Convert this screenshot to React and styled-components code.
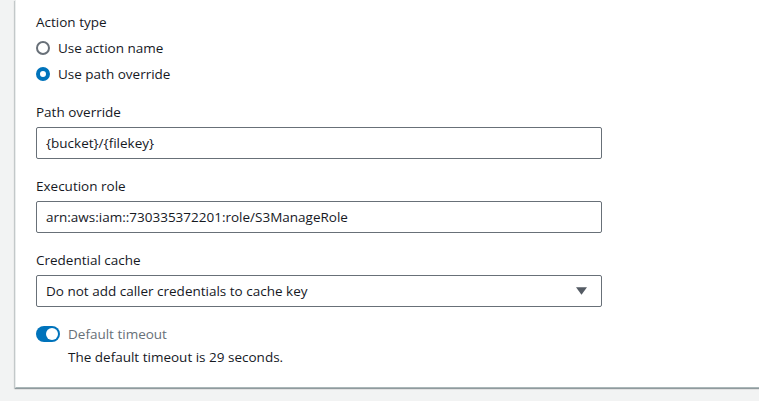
import styled, { createGlobalStyle } from "styled-components";

const GlobalStyle = createGlobalStyle`
    html, body {
        margin: 0;
        padding: 0;
        background: #f2f3f3;
        font-family: "Open Sans", "Noto Sans", Arial, sans-serif;
        color: #16191f;
    }
    * {
        box-sizing: border-box;
    }
`;

export default function App() {
    return (
        <>
            <GlobalStyle />
            <SCPage>
                <SCCard>
                    <SCField>
                        <SCLabel>Action type</SCLabel>
                        <SCRadioGroup>
                            <SCRadioRow>
                                <SCRadio checked={false} />
                                <span>Use action name</span>
                            </SCRadioRow>
                            <SCRadioRow>
                                <SCRadio checked={true} />
                                <span>Use path override</span>
                            </SCRadioRow>
                        </SCRadioGroup>
                    </SCField>

                    <SCField>
                        <SCLabel>Path override</SCLabel>
                        <SCInput>{"{bucket}/{filekey}"}</SCInput>
                    </SCField>

                    <SCField>
                        <SCLabel>Execution role</SCLabel>
                        <SCInput>arn:aws:iam::730335372201:role/S3ManageRole</SCInput>
                    </SCField>

                    <SCField>
                        <SCLabel>Credential cache</SCLabel>
                        <SCSelect>
                            <span>Do not add caller credentials to cache key</span>
                            <SCCaret viewBox="0 0 12 8">
                                <path d="M0 0 H12 L6 8 Z" fill="#545b64" />
                            </SCCaret>
                        </SCSelect>
                    </SCField>

                    <SCToggleBlock>
                        <SCToggleRow>
                            <SCToggle on={true} />
                            <SCToggleLabel>Default timeout</SCToggleLabel>
                        </SCToggleRow>
                        <SCDescription>The default timeout is 29 seconds.</SCDescription>
                    </SCToggleBlock>
                </SCCard>
            </SCPage>
        </>
    );
}

const SCPage = styled.div`
    width: 759px;
    height: 401px;
    overflow: hidden;
    padding-left: 15px;
`;

const SCCard = styled.div`
    width: 800px;
    background: #ffffff;
    border-left: 1px solid #eaeded;
    border-bottom: 1px solid #aab7b8;
    box-shadow: 0 1px 1px 0 rgba(0, 28, 36, 0.3), -1px 1px 1px 0 rgba(0, 28, 36, 0.15);
    padding: 11px 20px 19px 20px;
    display: flex;
    flex-direction: column;
    gap: 16px;
    font-size: 13.5px;
`;

const SCField = styled.div`
    display: flex;
    flex-direction: column;
    gap: 4px;
`;

const SCLabel = styled.div`
    line-height: 22px;
    color: #16191f;
`;

const SCRadioGroup = styled.div`
    display: flex;
    flex-direction: column;
    gap: 4px;
`;

const SCRadioRow = styled.div`
    display: flex;
    align-items: center;
    gap: 8px;
    line-height: 22px;
`;

const SCRadio = styled.span`
    width: 14px;
    height: 14px;
    border-radius: 50%;
    border: ${props => props.checked ? "4px solid #0073bb" : "2px solid #687078"};
    background: #ffffff;
    flex-shrink: 0;
`;

const SCInput = styled.div`
    width: 566px;
    height: 32px;
    border: 1px solid #687078;
    border-radius: 2px;
    padding: 0 9px;
    display: flex;
    align-items: center;
    color: #16191f;
`;

const SCSelect = styled(SCInput)`
    justify-content: space-between;
    padding-right: 14px;
`;

const SCCaret = styled.svg`
    width: 11px;
    height: 8px;
`;

const SCToggleBlock = styled.div`
    display: flex;
    flex-direction: column;
    gap: 1px;
`;

const SCToggleRow = styled.div`
    display: flex;
    align-items: center;
    gap: 8px;
    height: 22px;
`;

const SCToggle = styled.span`
    position: relative;
    width: 24px;
    height: 16px;
    border-radius: 8px;
    background: ${props => props.on ? "#0073bb" : "#687078"};
    flex-shrink: 0;
    &::after {
        content: "";
        position: absolute;
        top: 2px;
        left: ${props => props.on ? "10px" : "2px"};
        width: 12px;
        height: 12px;
        border-radius: 50%;
        background: #ffffff;
    }
`;

const SCToggleLabel = styled.span`
    line-height: 22px;
    color: #687078;
`;

const SCDescription = styled.div`
    padding-left: 32px;
    line-height: 22px;
    color: #16191f;
`;
